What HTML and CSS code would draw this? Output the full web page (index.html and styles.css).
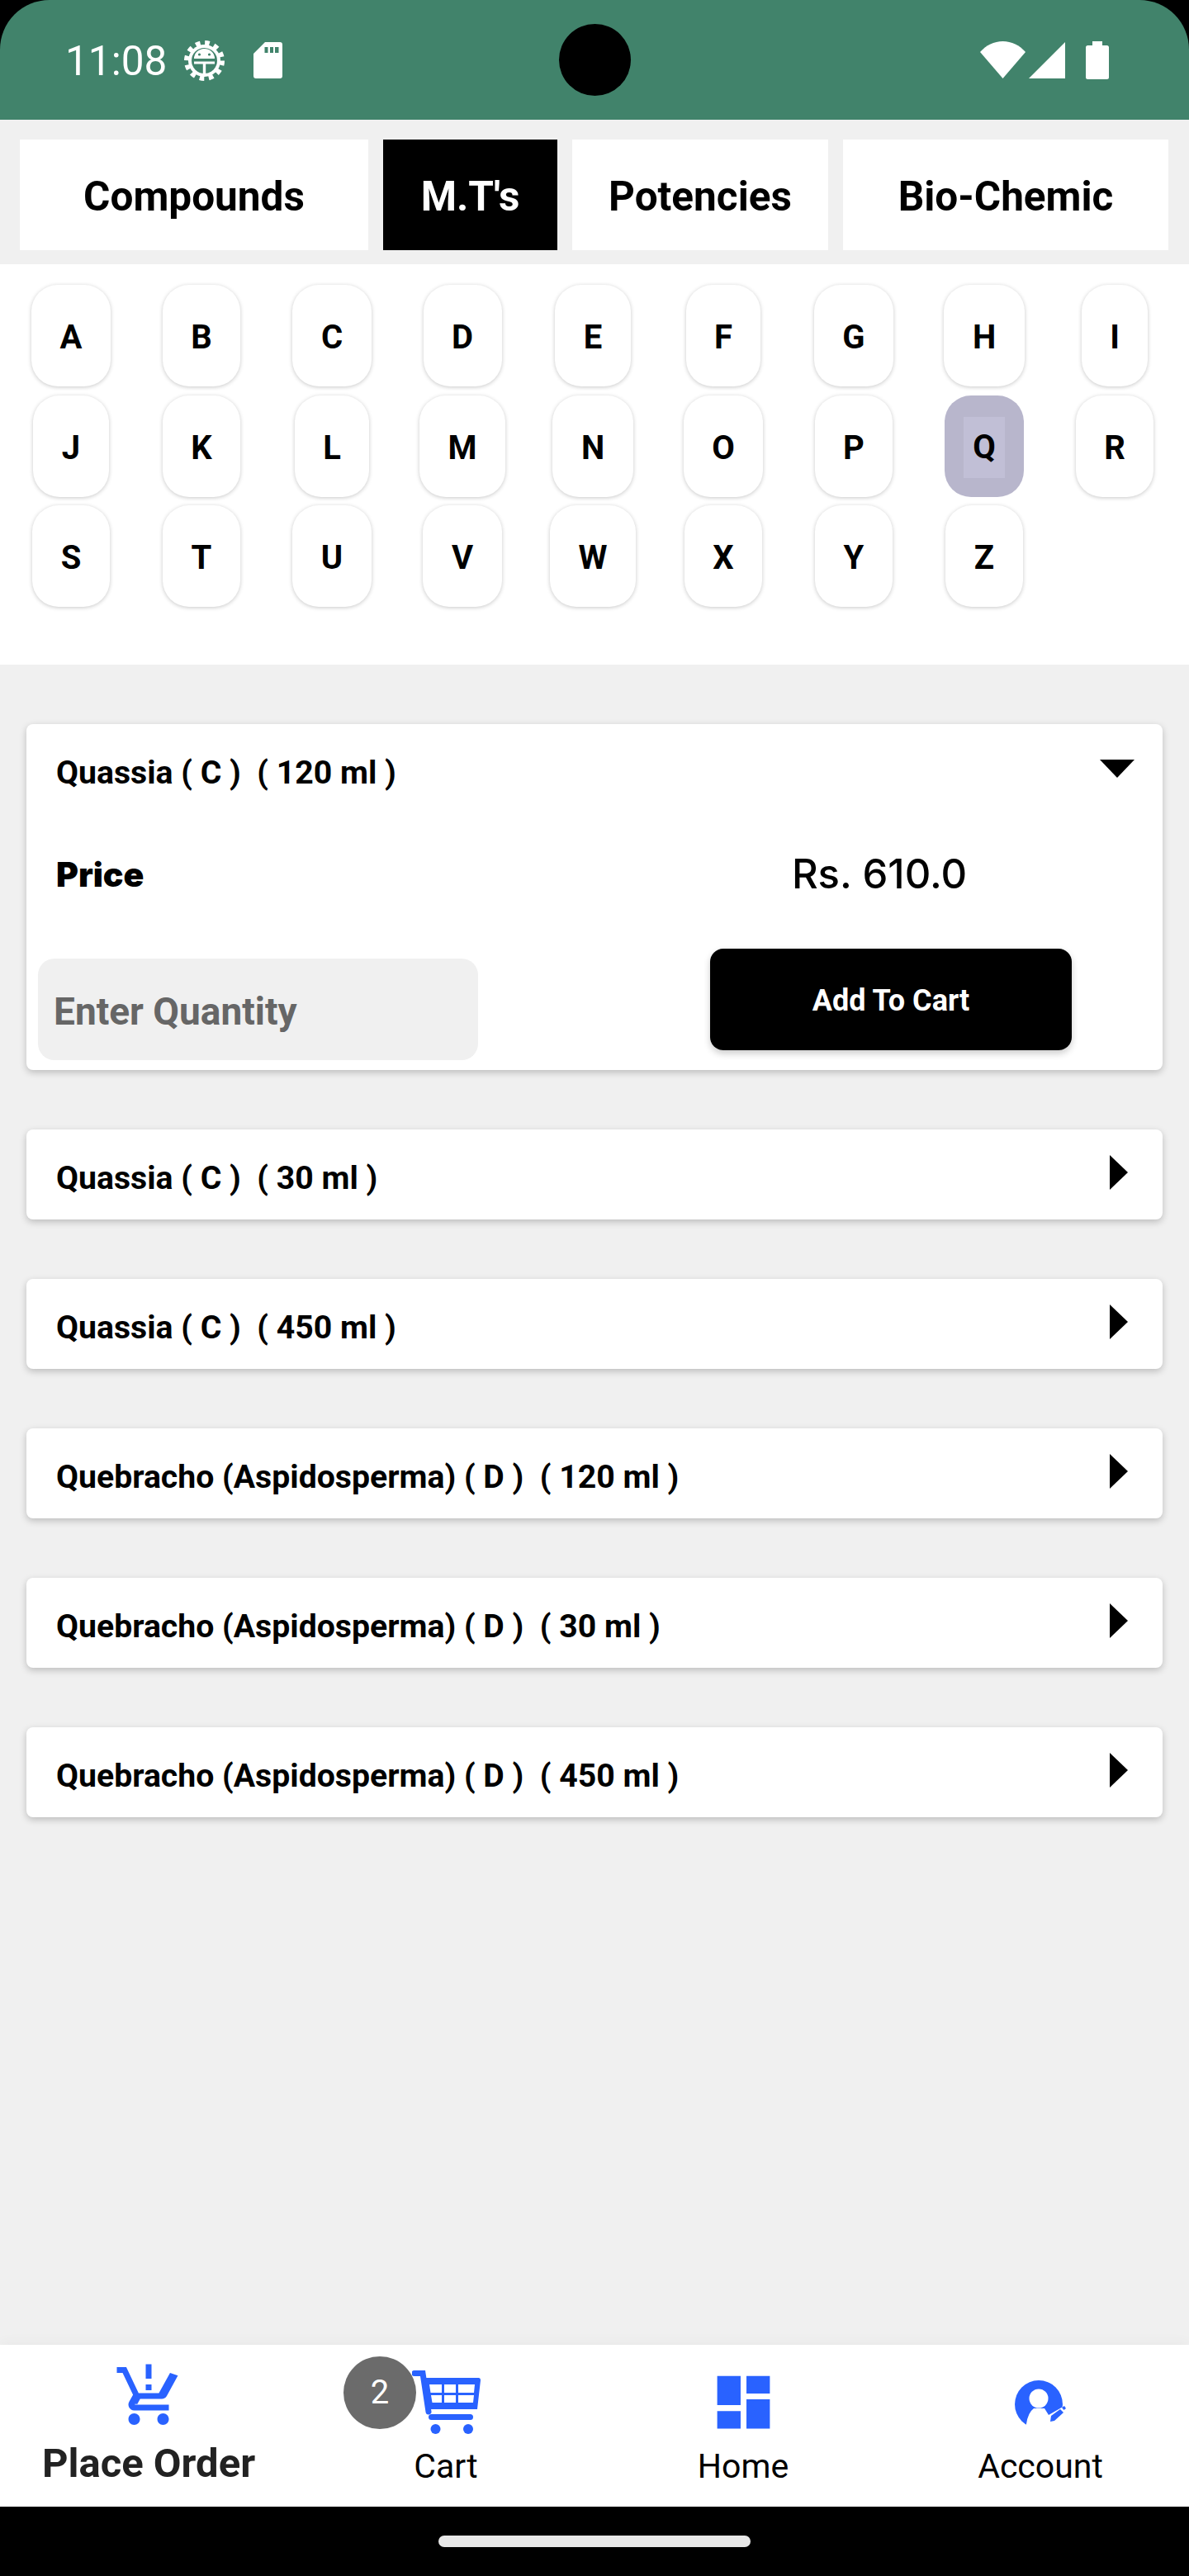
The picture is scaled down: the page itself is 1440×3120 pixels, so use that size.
FILE: index.html
```html
<!DOCTYPE html>
<html lang="en">
<head>
    <meta charset="UTF-8">
    <meta name="viewport" content="width=device-width, initial-scale=1.0">
    <title>Place Order</title>
    <link rel="stylesheet" href="styles.css">
</head>
<body>
    <div class="phone">
        <div class="status-bar">
            <div class="status-left">
                <span class="time">11:08</span>
                <svg class="gear" viewBox="0 0 49 49">
                    <circle cx="24.5" cy="24.5" r="21.5" fill="none" stroke="#fff" stroke-width="6" stroke-dasharray="5.6 5.66"/>
                    <circle cx="24.5" cy="24.5" r="19.5" fill="#fff"/>
                    <circle cx="24.5" cy="24.5" r="15.5" fill="#41836b"/>
                    <path d="M12 22a12.5 12 0 0 1 25 0z" fill="#fff"/>
                    <circle cx="18.5" cy="17" r="1.6" fill="#41836b"/>
                    <circle cx="30.5" cy="17" r="1.6" fill="#41836b"/>
                    <path d="M12 25.5h25v3H26.2V40h-3.4V28.500H12z" fill="#fff"/>
                </svg>
                <svg class="sd" viewBox="0 0 35 44">
                    <path fill-rule="evenodd" d="M14 0H32a3 3 0 0 1 3 3V41a3 3 0 0 1-3 3H3a3 3 0 0 1-3-3V14ZM13.500 6V13H17.500V6ZM20 6V13H24V6ZM26 6V13H30.500V6Z" fill="#fff"/>
                </svg>
            </div>
            <div class="camera"></div>
            <div class="status-right">
                <svg class="wifi" viewBox="0 0 55 45"><path d="M27.500 45L0 13C7 5 17 0 27.500 0S48 5 55 13Z" fill="#fff"/></svg>
                <svg class="signal" viewBox="0 0 44 44"><path d="M0 44L44 0V44Z" fill="#fff"/></svg>
                <svg class="battery" viewBox="0 0 28 46"><path d="M8 0H20V5H25.500A2.500 2.500 0 0 1 28 7.500V43.500A2.500 2.500 0 0 1 25.500 46H2.500A2.500 2.500 0 0 1 0 43.500V7.500A2.500 2.500 0 0 1 2.500 5H8Z" fill="#fff"/></svg>
            </div>
        </div>

        <div class="tabs">
            <div class="tab">Compounds</div>
            <div class="tab active">M.T's</div>
            <div class="tab">Potencies</div>
            <div class="tab">Bio-Chemic</div>
        </div>

        <div class="letters">
            <div class="letter"><span>A</span></div>
            <div class="letter"><span>B</span></div>
            <div class="letter"><span>C</span></div>
            <div class="letter"><span>D</span></div>
            <div class="letter"><span>E</span></div>
            <div class="letter"><span>F</span></div>
            <div class="letter"><span>G</span></div>
            <div class="letter"><span>H</span></div>
            <div class="letter"><span>I</span></div>
            <div class="letter"><span>J</span></div>
            <div class="letter"><span>K</span></div>
            <div class="letter"><span>L</span></div>
            <div class="letter"><span>M</span></div>
            <div class="letter"><span>N</span></div>
            <div class="letter"><span>O</span></div>
            <div class="letter"><span>P</span></div>
            <div class="letter selected"><span>Q</span></div>
            <div class="letter"><span>R</span></div>
            <div class="letter"><span>S</span></div>
            <div class="letter"><span>T</span></div>
            <div class="letter"><span>U</span></div>
            <div class="letter"><span>V</span></div>
            <div class="letter"><span>W</span></div>
            <div class="letter"><span>X</span></div>
            <div class="letter"><span>Y</span></div>
            <div class="letter"><span>Z</span></div>
        </div>

        <div class="products">
            <div class="card">
                <div class="card-head">
                    <span class="card-title">Quassia ( C )  ( 120 ml )</span>
                    <div class="arrow-down"></div>
                </div>
                <div class="price-row">
                    <span class="price-label">Price</span>
                    <span class="price-value">Rs. 610.0</span>
                </div>
                <div class="action-row">
                    <div class="qty-input">Enter Quantity</div>
                    <div class="add-btn">Add To Cart</div>
                </div>
            </div>
            <div class="card">
                <div class="card-head">
                    <span class="card-title">Quassia ( C )  ( 30 ml )</span>
                    <div class="arrow-right"></div>
                </div>
            </div>
            <div class="card">
                <div class="card-head">
                    <span class="card-title">Quassia ( C )  ( 450 ml )</span>
                    <div class="arrow-right"></div>
                </div>
            </div>
            <div class="card">
                <div class="card-head">
                    <span class="card-title">Quebracho (Aspidosperma) ( D )  ( 120 ml )</span>
                    <div class="arrow-right"></div>
                </div>
            </div>
            <div class="card">
                <div class="card-head">
                    <span class="card-title">Quebracho (Aspidosperma) ( D )  ( 30 ml )</span>
                    <div class="arrow-right"></div>
                </div>
            </div>
            <div class="card">
                <div class="card-head">
                    <span class="card-title">Quebracho (Aspidosperma) ( D )  ( 450 ml )</span>
                    <div class="arrow-right"></div>
                </div>
            </div>
        </div>

        <div class="bottom-nav">
            <div class="nav-item active">
                <div class="nav-icon">
                    <svg class="icon-order" viewBox="0 0 24 24"><path d="M13 10h-2V8h2v2zm0-4h-2V1h2v5zM7 18c-1.100 0-1.990.9-1.990 2S5.900 22 7 22s2-.9 2-2-.9-2-2-2zm10 0c-1.100 0-1.990.9-1.990 2s.89 2 1.990 2 2-.9 2-2-.9-2-2-2zm-8.860-3.250.03-.12.9-1.630h7.450c.75 0 1.410-.41 1.750-1.030l3.860-7.010L19.420 4l-3.870 7H8.530L4.270 2H1v2h2l3.600 7.590-1.350 2.440C4.520 15.370 5.480 17 7 17h12v-2H7.420c-.13 0-.25-.11-.25-.25z"/></svg>
                </div>
                <div class="nav-label">Place Order</div>
            </div>
            <div class="nav-item">
                <div class="badge">2</div>
                <div class="nav-icon">
                    <svg class="icon-cart" viewBox="0 0 83 77">
                        <path d="M3 3.500H13L20 50" fill="none" stroke="#2962ff" stroke-width="7" stroke-linecap="round"/>
                        <path fill-rule="evenodd" d="M12 9H80.500Q83 9 83 12L79 47H19ZM21 17L22.500 27H36V17ZM39 17V27H53V17ZM56 17V27H75L76 17ZM23 30L24.500 39H36V30ZM39 30V39H53V30ZM56 30V39H74L75 30Z"/>
                        <rect x="20" y="53" width="54" height="7" rx="3.500"/>
                        <circle cx="28.500" cy="71" r="6"/>
                        <circle cx="68" cy="71" r="6"/>
                    </svg>
                </div>
                <div class="nav-label">Cart</div>
            </div>
            <div class="nav-item">
                <div class="nav-icon">
                    <svg class="icon-home" viewBox="0 0 24 24"><path d="M3 13h8V3H3v10zm0 8h8v-6H3v6zm10 0h8V11h-8v10zm0-18v6h8V3h-8z"/></svg>
                </div>
                <div class="nav-label">Home</div>
            </div>
            <div class="nav-item">
                <div class="nav-icon">
                    <svg class="icon-account" viewBox="0 0 100 100">
                        <circle cx="48" cy="42" r="29"/>
                        <path d="M33 76V66Q35 52 42 47H55L60 55L86 40V76Z" fill="#fff"/>
                        <circle cx="48" cy="35" r="11.500" fill="#fff"/>
                        <path d="M62 63L63 56L74 48L78 52L67 62Z"/>
                        <path d="M76 46L79 44L81 47L78.500 49Z"/>
                    </svg>
                </div>
                <div class="nav-label">Account</div>
            </div>
        </div>

        <div class="gesture-bar">
            <div class="gesture-pill"></div>
        </div>
    </div>
</body>
</html>
```
FILE: styles.css
```css
* {
    box-sizing: border-box;
}

body {
    margin: 0;
    background-color: #000;
    font-family: Roboto, "Liberation Sans", sans-serif;
}

.phone {
    display: flex;
    flex-direction: column;
    width: 1440px;
    height: 3120px;
    background-color: #000;
}

/* status bar */
.status-bar {
    position: relative;
    display: flex;
    justify-content: space-between;
    align-items: flex-start;
    height: 145px;
    background-color: #41836b;
    border-radius: 60px 60px 0 0;
}

.status-left {
    display: flex;
    align-items: flex-start;
    padding: 49px 0 0 79px;
    color: #fff;
}

.time {
    width: 144px;
    font-size: 49.500px;
    line-height: 50px;
}

.gear {
    width: 49px;
    height: 49px;
}

.sd {
    width: 35px;
    height: 44px;
    margin: 2px 0 0 35px;
}

.camera {
    position: absolute;
    left: 677px;
    top: 29px;
    width: 87px;
    height: 87px;
    border-radius: 50%;
    background-color: #000;
}

.status-right {
    display: flex;
    align-items: flex-start;
    padding: 50px 97px 0 0;
}

.wifi {
    width: 55px;
    height: 45px;
}

.signal {
    width: 44px;
    height: 44px;
    margin: 1px 0 0 4px;
}

.battery {
    width: 28px;
    height: 46px;
    margin-left: 25px;
}

/* tabs */
.tabs {
    display: grid;
    grid-template-columns: 422px 211px 310px 394px;
    gap: 18px;
    padding: 24px 0 17px 24px;
    background-color: #f0f0f0;
}

.tab {
    display: flex;
    justify-content: center;
    align-items: center;
    height: 134px;
    padding-top: 4px;
    background-color: #fff;
    color: #000;
    font-size: 49.500px;
    font-weight: 700;
}

.tab.active {
    background-color: #000;
    color: #fff;
}

/* alphabet */
.letters {
    display: grid;
    grid-template-columns: repeat(9, 158px);
    grid-auto-rows: 123px;
    row-gap: 10.500px;
    justify-items: center;
    height: 485px;
    padding: 25px 0 0 7px;
    background-color: #fff;
}

.letter {
    display: flex;
    align-items: center;
    height: 123px;
    padding: 4px 34.500px 0;
    background-color: #fff;
    border-radius: 32px;
    box-shadow: 0 1px 5px rgba(0, 0, 0, 0.22);
    font-size: 40px;
    font-weight: 700;
}

.letter.selected {
    padding-left: 23.500px;
    padding-right: 23.500px;
    background-color: #b8b6cc;
    box-shadow: none;
}

.letter.selected span {
    padding: 0 11px;
    line-height: 74px;
    background-color: #c1bfd6;
}

/* product list */
.products {
    display: flex;
    flex-direction: column;
    flex: 1;
    gap: 72px;
    padding: 72px 32px 0;
    background-color: #f0f0f0;
}

.card {
    background-color: #fff;
    border-radius: 8px;
    box-shadow: 0 3px 8px rgba(0, 0, 0, 0.22);
}

.card-head {
    position: relative;
    display: flex;
    align-items: center;
    height: 109px;
    padding: 8px 0 0 36px;
}

.card-title {
    font-size: 39.200px;
    font-weight: 700;
    white-space: pre;
}

.arrow-down {
    position: absolute;
    left: 1299.500px;
    top: 43px;
    width: 0;
    height: 0;
    border-left: 21.500px solid transparent;
    border-right: 21.500px solid transparent;
    border-top: 22px solid #000;
}

.arrow-right {
    position: absolute;
    left: 1312px;
    top: 31px;
    width: 0;
    height: 0;
    border-top: 21.500px solid transparent;
    border-bottom: 21.500px solid transparent;
    border-left: 22px solid #000;
}

.price-row {
    display: grid;
    grid-template-columns: 50% 50%;
    align-items: center;
    height: 163px;
    padding: 0 0 18px 36px;
}

.price-label {
    font-family: Inter, sans-serif;
    font-size: 41px;
    font-weight: 900;
}

.price-value {
    justify-self: center;
    margin-left: -16px;
    font-family: Inter, sans-serif;
    font-size: 49px;
    font-weight: 500;
}

.action-row {
    display: flex;
    align-items: flex-start;
    gap: 281px;
    padding: 0 0 12px 14px;
}

.qty-input {
    display: flex;
    align-items: center;
    width: 533px;
    height: 123px;
    margin-top: 12px;
    padding: 4px 0 0 19px;
    background-color: #f0f0f0;
    border-radius: 20px;
    color: #666;
    font-size: 46px;
    font-weight: 700;
}

.add-btn {
    display: flex;
    justify-content: center;
    align-items: center;
    width: 438px;
    height: 123px;
    padding-top: 2px;
    background-color: #000;
    border-radius: 16px;
    box-shadow: 0 4px 8px rgba(0, 0, 0, 0.2);
    color: #fff;
    font-size: 36px;
    font-weight: 700;
}

/* bottom navigation */
.bottom-nav {
    display: grid;
    grid-template-columns: repeat(4, 360px);
    height: 196px;
    background-color: #fff;
    box-shadow: 0 -4px 14px rgba(0, 0, 0, 0.03);
}

.nav-item {
    position: relative;
    color: #000;
    text-align: center;
}

.nav-icon {
    display: flex;
    justify-content: center;
    align-items: flex-start;
    height: 123px;
}

.nav-icon svg {
    fill: #2962ff;
}

.icon-order {
    width: 84px;
    height: 84px;
    margin-top: 20px;
}

.icon-cart {
    width: 83px;
    height: 77px;
    margin-top: 31px;
}

.icon-home {
    width: 85px;
    height: 85px;
    margin-top: 27px;
}

.icon-account {
    width: 100px;
    height: 100px;
    margin-top: 30px;
}

.nav-label {
    font-size: 41px;
    line-height: 48px;
}

.nav-item.active .nav-label {
    color: #222;
    font-size: 49px;
    font-weight: 700;
    line-height: 42px;
}

.badge {
    position: absolute;
    left: 56px;
    top: 14px;
    width: 88px;
    height: 88px;
    border-radius: 50%;
    background-color: #6b6b6b;
    color: #fff;
    font-size: 40px;
    line-height: 88px;
}

.gesture-bar {
    height: 84px;
    padding: 35px 0 0 531px;
    background-color: #000;
}

.gesture-pill {
    width: 378px;
    height: 14px;
    border-radius: 7px;
    background-color: #e8e8e8;
}
```
